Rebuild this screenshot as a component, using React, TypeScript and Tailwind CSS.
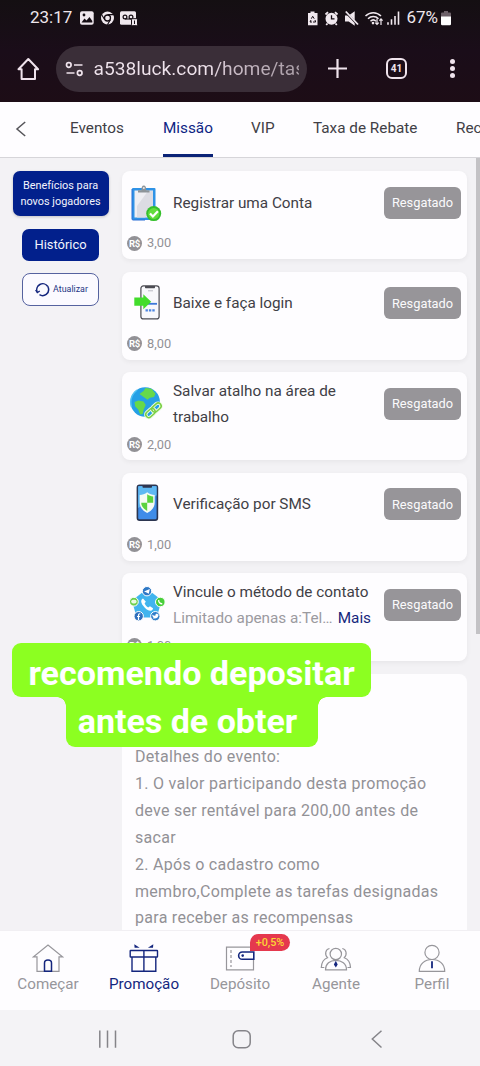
import type { ReactNode } from "react";

const tasks = [
  { title: "Registrar uma Conta", amount: "3,00", icon: <ClipboardIcon /> },
  { title: "Baixe e faça login", amount: "8,00", icon: <DownloadIcon /> },
  { title: "Salvar atalho na área de trabalho", amount: "2,00", icon: <GlobeIcon /> },
  { title: "Verificação por SMS", amount: "1,00", icon: <ShieldPhoneIcon /> },
  {
    title: "Vincule o método de contato",
    amount: "1,00",
    icon: <ContactIcon />,
    note: "Limitado apenas a:Tel…",
  },
];

const details = [
  "Detalhes do evento:",
  "1. O valor participando desta promoção",
  "deve ser rentável para 200,00 antes de",
  "sacar",
  "2. Após o cadastro como",
  "membro,Complete as tarefas designadas",
  "para receber as recompensas",
];

function TaskSvg({ children }: { children: ReactNode }) {
  return (
    <svg width="36" height="40" viewBox="0 0 36 40" fill="none" className="shrink-0">
      {children}
    </svg>
  );
}

function ClipboardIcon() {
  return (
    <TaskSvg>
      <rect x="2" y="5" width="23.5" height="32" rx="1" fill="#2f93e6" />
      <path d="M2 6v30a1 1 0 0 0 1 1h12" stroke="#2a6fd6" strokeWidth="1" />
      <rect x="4.5" y="7.5" width="18.5" height="27" fill="#eeeef3" />
      <path d="M7 23 18 8h5v20l-8 6.500H7z" fill="#dcdce3" />
      <path d="M8 9.500V7.200h3.500C11.500 4 12 2.500 13.800 2.500S16.200 4 16.200 7.200H19.500v2.300z" fill="#8d9499" />
      <circle cx="13.800" cy="5" r="1" fill="#e8e8ea" />
      <circle cx="23.700" cy="30.600" r="7.500" fill="#35bf2c" />
      <circle cx="23.700" cy="30.600" r="5.600" fill="#62dd3c" />
      <path d="m20 30.500 2.900 3 5-5.300" stroke="#fff" strokeWidth="2.200" />
    </TaskSvg>
  );
}

function DownloadIcon() {
  return (
    <TaskSvg>
      <rect x="10.900" y="2.900" width="18.200" height="33" rx="2.500" fill="#f8f8fb" stroke="#4b4b52" strokeWidth="1.200" />
      <path d="M15 3h10v1.200c0 .6-.4 1-1 1h-8c-.6 0-1-.4-1-1z" fill="#4b4b52" />
      <path d="M18 7.800h5" stroke="#b9b9c2" strokeWidth="1" />
      <path d="M18 20.800h9" stroke="#3d79d8" strokeWidth="1.800" />
      <path d="M15.500 27.300h9.500" stroke="#4e86e0" strokeWidth="2.200" strokeDasharray="2.400 1" />
      <path d="M4.300 14.500h9v-3.300l7.900 7.500-7.900 7.500v-3.400h-9z" fill="#43dc2c" />
    </TaskSvg>
  );
}

function GlobeIcon() {
  return (
    <TaskSvg>
      <circle cx="15.200" cy="18" r="14.700" fill="#25a0e6" />
      <path d="M7 6c-5 4-7.500 10-5.500 17" stroke="#53c3f2" strokeWidth="1.500" />
      <path d="m9.500 10 4-3 2-3 6 .8 4 5-1.500 3.200-4 .8-2.500 2-3.500-2.500z" fill="#66d94a" />
      <path d="m4.500 18 4-1.500 5 1 2.200 3.500-2 4.500-1 4.500-2.500.5-2-5-3-3z" fill="#66d94a" />
      <g transform="rotate(-42 23.600 26.300)">
        <rect x="14.200" y="23.200" width="10.500" height="6" rx="3" stroke="#eafbe2" strokeWidth="3.400" />
        <rect x="22.300" y="23.200" width="10.500" height="6" rx="3" stroke="#eafbe2" strokeWidth="3.400" />
        <rect x="14.200" y="23.200" width="10.500" height="6" rx="3" stroke="#7bcf45" strokeWidth="1.500" />
        <rect x="22.300" y="23.200" width="10.500" height="6" rx="3" stroke="#7bcf45" strokeWidth="1.500" />
      </g>
    </TaskSvg>
  );
}

function ShieldPhoneIcon() {
  return (
    <TaskSvg>
      <rect x="7.400" y="1.300" width="20" height="34.800" rx="2.200" fill="#3f8ce8" stroke="#2c3550" strokeWidth="1.600" />
      <path d="M8.200 2.200h18.400v9L8.200 24z" fill="#5fb9f3" />
      <path d="M12.500 1.500h9.500v1.200c0 .6-.4 1-1 1h-7.500c-.6 0-1-.4-1-1z" fill="#2c3550" />
      <path d="M17.200 8.300c2.300 1.900 4.800 2.500 7.500 2.700v7.500c0 5-3.500 8.500-7.500 10.500-4-2-7.500-5.500-7.500-10.500V11c2.700-.2 5.200-.8 7.500-2.700z" fill="#f6fbf4" />
      <path d="M17.200 10.300c2 1.400 3.800 2 6 2.300v6.200h-6z" fill="#5cd23e" />
      <path d="M17.200 18.800v8.200c-3.300-1.900-6-4.500-6-8.200z" fill="#5cd23e" />
    </TaskSvg>
  );
}

function ContactIcon() {
  return (
    <TaskSvg>
      <path d="m17 5 13.500 10.500-4.500 16-18.500 0L3 16z" fill="#41b4ee" stroke="#41b4ee" strokeWidth="2" strokeLinejoin="round" />
      <path d="M13 13.500c-2.500 1.500-2.200 4 0 7s5 5.500 7.500 5.200c1.700-.2 2.700-1.500 2.500-2.500l-3-2-1.800 1.200c-1.600-.8-3-2.500-3.600-4.200l1.300-1.500z" fill="#fff" />
      <g stroke="#fff" strokeWidth="1">
        <circle cx="17" cy="6.200" r="4.700" fill="#2f78c6" />
        <circle cx="3.900" cy="16.700" r="4.400" fill="#6ccf4c" />
        <circle cx="30.300" cy="17" r="4.800" fill="#49cf3a" />
        <circle cx="8.700" cy="31.200" r="4.700" fill="#2f6fbd" />
        <circle cx="25.300" cy="31.200" r="4.700" fill="#2f7dc9" />
      </g>
      <path d="m14 6.500 5.800-2.400-1 4.700-2.300-1.400z" fill="#fff" />
      <rect x="1.200" y="14.700" width="5.400" height="3.800" rx="1.900" fill="#eafbe2" />
      <path d="M28.700 15c-.3 2 1.500 4 3.600 3.700" stroke="#fff" strokeWidth="1.300" />
      <path d="M10.300 28.800c-1.500-.3-1.800.4-1.800 1.600V35M7 31.500h3" stroke="#fff" strokeWidth="1.200" />
      <path d="M22.300 29.500c1 1 2 1.300 3 1.200 0-1.800 1.500-2.200 2.500-1.500l.8.200c-.3 3-2 4.600-6 3.800l1-.7c-1-.8-1.400-1.800-1.300-3z" fill="#fff" />
    </TaskSvg>
  );
}

function StatusBar() {
  return (
    <div className="flex h-9 items-center pl-[30px] pr-[29px] text-[17px] text-[#eee6ec]">
      <span className="w-[50px] shrink-0">23:17</span>
      <svg width="58" height="16" viewBox="80 10 58 16" fill="none">
        <rect x="80" y="11.300" width="13.700" height="13.500" rx="2" fill="#f0e8ee" />
        <circle cx="84" cy="15" r="1.400" fill="#150d14" />
        <path d="m81.500 22.500 3-4 2 2 3-3.500 2.800 4v1.500z" fill="#150d14" />
        <circle cx="107.500" cy="18" r="6.500" fill="#f0e8ee" />
        <circle cx="107.500" cy="18" r="3" fill="#f0e8ee" stroke="#150d14" strokeWidth="1.300" />
        <path d="M107.500 14.600h6M104.700 19.800l-3-5M110.400 19.700l-3 5" stroke="#150d14" strokeWidth="1.100" />
        <rect x="120" y="11.300" width="16" height="13.500" rx="1.500" fill="#f0e8ee" />
        <circle cx="125" cy="17" r="1.900" stroke="#150d14" strokeWidth="1.200" />
        <circle cx="131" cy="17" r="1.900" stroke="#150d14" strokeWidth="1.200" />
        <path d="M125 19h6" stroke="#150d14" strokeWidth="1.100" />
        <rect x="131.500" y="18.700" width="6" height="7" rx="1" fill="#f0e8ee" stroke="#150d14" strokeWidth="1" />
        <path d="M134.500 20.500v3.500" stroke="#150d14" strokeWidth="1" />
      </svg>
      <svg className="ml-auto mr-[6px] shrink-0" width="94" height="17" viewBox="306 9.500 94 17" fill="none">
        <path d="M310.500 11h4v1.500h3v12.300h-9.500V12.500h2.500z" fill="#f0e8ee" />
        <path d="m311.300 18.200 1.400-2.400 1.500 2.400M315 19.500l.6 2h-2.600M312 21.500h-2l1-2" stroke="#150d14" strokeWidth="1" />
        <circle cx="331.500" cy="18.300" r="6" fill="#f0e8ee" />
        <path d="m325.500 14 2.500-2.300M337.500 14 335 11.700M327.500 23l-1.300 1.500M335.500 23l1.300 1.500" stroke="#f0e8ee" strokeWidth="1.800" />
        <path d="M331.500 14.800v3.500h3" stroke="#150d14" strokeWidth="1.300" />
        <path d="M345 15h3.700l6-4.200v14.400l-6-4.200H345z" fill="#f0e8ee" />
        <path d="m344.500 10.500 13 13.500" stroke="#150d14" strokeWidth="2" />
        <path d="m345.800 11 12.200 13" stroke="#f0e8ee" strokeWidth="1.800" />
        <path d="M365.500 15.500c4.500-4.500 11-4.500 15.500 0M368 18.200c3-3 7.500-3 10.500 0M370.500 20.700c1.600-1.500 3.900-1.500 5.500 0" stroke="#f0e8ee" strokeWidth="1.500" />
        <circle cx="373" cy="22.600" r="1.300" fill="#f0e8ee" />
        <path d="M377 18v6m-1.800-1.800L377 24l1.800-1.800M381 24.500v-6m-1.600 1.700 1.600-1.700 1.600 1.700" stroke="#f0e8ee" strokeWidth="1.200" />
        <path d="M388 24.300v-2.500M391.500 24.300v-5.500M395 24.300v-8.800M398.500 24.300V11" stroke="#f0e8ee" strokeWidth="1.600" />
      </svg>
      <span className="shrink-0">67%</span>
      <svg className="ml-[3px] shrink-0" width="10" height="15" viewBox="0 0 10 15">
        <path d="M3 0h4v1.500h2a1 1 0 0 1 1 1V6H0V2.500a1 1 0 0 1 1-1h2z" fill="#6d6169" />
        <path d="M0 5.500h10V13a1.200 1.200 0 0 1-1.200 1.200H1.200A1.200 1.200 0 0 1 0 13z" fill="#fff" />
      </svg>
    </div>
  );
}

function BrowserBar() {
  return (
    <div className="flex h-[66px] items-center pb-[1px] text-[#efe3ec]">
      <svg className="ml-[17px] shrink-0" width="23" height="24" viewBox="0 0 23 24" fill="none" stroke="currentColor" strokeWidth="2">
        <path d="M1.500 12.200 11.300 2l9.800 10.200H18V22H4.600v-9.800z" strokeLinejoin="round" />
      </svg>
      <div className="ml-[16px] flex h-[46px] w-[251px] shrink-0 items-center rounded-full bg-[#3a2e38] pl-[9px]">
        <svg className="shrink-0" width="19" height="16" viewBox="0 0 19 16" fill="none" stroke="currentColor" strokeWidth="1.700">
          <circle cx="3.800" cy="4" r="2.300" />
          <path d="M9 4h8.500M1.500 12h8" />
          <circle cx="14.700" cy="12" r="2.300" />
        </svg>
        <div className="ml-[9.500px] w-[205px] overflow-hidden whitespace-nowrap bg-linear-to-r from-[#efe3ec] from-55% via-[#cdbfca] via-65% to-[#a99da6] bg-clip-text pt-[2px] text-[19.200px] text-transparent">
          a538luck.com/home/task
        </div>
      </div>
      <svg className="ml-[21px] shrink-0" width="19" height="19" viewBox="0 0 19 19" stroke="currentColor" strokeWidth="2.200">
        <path d="M9.500 0v19M0 9.500h19" />
      </svg>
      <div className="ml-[39px] flex h-[21px] w-[21px] shrink-0 items-center justify-center rounded-[6px] border-2 border-[#efe3ec] text-[10px] font-bold">
        41
      </div>
      <div className="ml-[43px] flex flex-col gap-[2.500px]">
        <span className="size-[4.600px] rounded-full bg-[#efe3ec]" />
        <span className="size-[4.600px] rounded-full bg-[#efe3ec]" />
        <span className="size-[4.600px] rounded-full bg-[#efe3ec]" />
      </div>
    </div>
  );
}

function Tabs() {
  return (
    <div className="flex h-14 shrink-0 items-stretch overflow-hidden whitespace-nowrap border-b border-[#d6d5d9] bg-[#fefdff] text-[15.300px] leading-[52px] text-[#414046]">
      <svg className="ml-[15px] mt-[19px] shrink-0" width="12" height="16" viewBox="0 0 12 16" fill="none" stroke="#555459" strokeWidth="1.500">
        <path d="M10.200 1 2 8l8.200 7" />
      </svg>
      <span className="ml-[43px] w-[55px] shrink-0">Eventos</span>
      <span className="ml-[38px] w-[50px] shrink-0 border-b-[3px] border-[#0b2377] text-[#0d2484]">Missão</span>
      <span className="ml-[38px] w-[24px] shrink-0">VIP</span>
      <span className="ml-[38px] w-[106px] shrink-0">Taxa de Rebate</span>
      <span className="ml-[37px] shrink-0">Recompensas</span>
    </div>
  );
}

function Sidebar() {
  return (
    <div className="flex w-[122px] shrink-0 flex-col items-center pr-px pt-[13px] text-[#f3f4fd]">
      <div className="flex h-[45px] w-24 items-center justify-center rounded-[7px] bg-[#02208c] text-center text-[10.900px] leading-4 shadow-[0_1px_3px_#0003]">
        Benefícios para
        <br />
        novos jogadores
      </div>
      <div className="mt-[13px] flex h-8 w-[77px] items-center justify-center rounded-[7px] bg-[#02208c] text-[12.900px]">
        Histórico
      </div>
      <div className="mt-3 flex h-[33px] w-[77px] items-center justify-center gap-[3px] rounded-[8px] border border-[#55629f] bg-[#fbfaff] pl-[2px] text-[8.900px] text-[#263684]">
        <svg width="15" height="15" viewBox="0 0 15 15" fill="none" stroke="#14267e" strokeWidth="1.500">
          <path d="M2.200 10A6 6 0 0 1 12.600 4.200M13.400 6A6 6 0 0 1 4.500 12.700" />
          <path d="M12.600 4.200A6 6 0 0 1 13.400 6" />
          <path d="m.6 8 1.700 2.600L4.800 9" strokeWidth="1.300" />
        </svg>
        Atualizar
      </div>
    </div>
  );
}

function TaskCard({ title, amount, icon, note }: { title: string; amount: string; icon: ReactNode; note?: string }) {
  return (
    <div className="h-[88px] shrink-0 rounded-[8px] bg-[#fefdff] shadow-[0_2px_5px_#0000000d]">
      <div className="flex h-[63px] items-center pl-2 pr-[6px]">
        {icon}
        <div className="ml-[7px] w-[200px] text-[15.300px] leading-[26px] text-[#414046]">
          {title}
          {note && (
            <div className="flex justify-between whitespace-nowrap pr-[2px] text-[#9b9a9f]">
              {note}
              <span className="text-[#15267d]">Mais</span>
            </div>
          )}
        </div>
        <div className="ml-auto flex h-8 w-[77px] shrink-0 items-center justify-center rounded-[6px] bg-[#979599] text-[12.800px] text-[#fbfafc]">
          Resgatado
        </div>
      </div>
      <div className="-mt-px flex h-5 items-center pl-[5px] text-[12.800px] text-[#929196]">
        <span className="mr-[5px] flex size-[15px] items-center justify-center rounded-full bg-[#929196] text-[9.500px] font-bold leading-[15px] tracking-[-0.300px] text-white">
          R$
        </span>
        {amount}
      </div>
    </div>
  );
}

function NavItem({ label, active, children }: { label: string; active?: boolean; children: ReactNode }) {
  return (
    <div className="relative flex w-24 flex-col items-center pt-[11px]">
      <svg width="32" height="32" viewBox="0 0 32 32" fill="none" stroke="#97969b" strokeWidth="1.200">
        {children}
      </svg>
      <span className={active ? "text-[#14267e]" : "text-[#97969b]"}>{label}</span>
    </div>
  );
}

function BottomNav() {
  return (
    <nav className="flex h-20 shrink-0 border-t border-[#f1eff3] bg-[#fefdff] text-[15.200px] leading-[21px]">
      <NavItem label="Começar">
        <path d="M5 14.800H1.500L16 3l14.500 11.800H27v14.500H5z" />
        <path d="M12.500 29.300V21c0-2 1.200-3 3.500-3s3.500 1 3.500 3v8.300z" stroke="#14267e" strokeWidth="1.500" />
      </NavItem>
      <NavItem label="Promoção" active>
        <g stroke="#14267e" strokeWidth="1.400">
          <rect x="2.200" y="8.500" width="27.300" height="6.500" rx=".5" />
          <path d="M4 15v14.300h23.800V15M15.900 8.500v20.800" />
        </g>
        <path d="m6.300 2.300 5.400 3.500H6.600zM25.300 2.300l-5.400 3.500H25z" fill="#14267e" stroke="none" />
      </NavItem>
      <div className="relative">
        <NavItem label="Depósito">
          <path d="M29.500 9V5.200h-27v22.600h27v-10" />
          <path d="M7 8v17" strokeDasharray="3 2" />
          <path d="M29.800 10H18.300a3.600 3.600 0 0 0 0 7.300h11.500z" stroke="#14267e" strokeWidth="1.600" />
          <circle cx="18.700" cy="13.600" r="1.300" fill="#14267e" stroke="none" />
        </NavItem>
        <span className="absolute left-[58px] top-[3px] h-[17px] w-10 rounded-[9px] rounded-bl-none bg-[#e5384e] text-center text-[10.800px] font-medium leading-[17px] text-[#fbd535]">
          +0,5%
        </span>
      </div>
      <NavItem label="Agente">
        <circle cx="15.800" cy="12" r="5.700" />
        <path d="M5.500 27.800c0-6 4.500-9.500 10.300-9.500s10.700 3.500 10.700 9.500z" />
        <path d="M9.500 6.500c-4 .5-5.200 6-2 9.200-3.500 1.300-6 4.500-6.200 9.800h3M22.300 6.500c4 .5 5.200 6 2 9.200 3.500 1.300 6 4.500 6.200 9.800h-3" />
        <path d="m15.800 18.800 1.900 3.800-1.900 2.800-1.900-2.800z" fill="#14267e" stroke="none" />
      </NavItem>
      <NavItem label="Perfil">
        <circle cx="16" cy="10.400" r="7.100" />
        <path d="M3.300 29.300c0-7.500 5.500-11.800 12.700-11.800s12.700 4.300 12.700 11.800z" />
        <path d="M16 19.300v7" stroke="#14267e" strokeWidth="1.800" />
      </NavItem>
    </nav>
  );
}

function SystemNav() {
  return (
    <div className="flex h-14 shrink-0 items-center bg-[#f4f3f6] pl-[98px]">
      <svg width="288" height="20" viewBox="98 0 288 20" fill="none" stroke="#858489" strokeWidth="1.500" className="mt-[2px]">
        <path d="M99.800 1.500v17.300M107.500 1.500v17.300M115.500 1.500v17.300" />
        <rect x="233.200" y="1.700" width="17" height="17" rx="5" />
        <path d="M381.500 1.700 372.300 10l9.200 8.500" />
      </svg>
    </div>
  );
}

function Caption() {
  return (
    <div className="absolute left-3 top-[643px] whitespace-nowrap font-bold text-white">
      <div className="h-[54px] w-[359px] rounded-[9px] bg-[#8cff21] text-center text-[34.100px] leading-[61px]">
        <span className="relative z-10">recomendo depositar</span>
      </div>
      <div className="relative -mt-[9px] ml-[54px] h-[59px] w-[252px] rounded-b-[9px] bg-[#8cff21] pr-[9px] text-center text-[34px] leading-[67px]">
        antes de obter
        <span className="absolute -left-[9px] top-[9px] size-[9px] bg-[radial-gradient(circle_at_0_100%,transparent_8.500px,#8cff21_9px)]" />
        <span className="absolute -right-[9px] top-[9px] size-[9px] bg-[radial-gradient(circle_at_100%_100%,transparent_8.500px,#8cff21_9px)]" />
      </div>
    </div>
  );
}

export default function App() {
  return (
    <div className="relative flex h-[1066px] w-[480px] flex-col overflow-hidden bg-[#f3f2f5] font-['Roboto',sans-serif]">
      <header className="h-[102px] shrink-0 bg-linear-to-b from-[#140f12] via-[#1a0d19] to-[#1d0d16]">
        <StatusBar />
        <BrowserBar />
      </header>
      <Tabs />
      <main className="flex h-[772px] shrink-0 overflow-hidden">
        <Sidebar />
        <div className="flex w-[345px] flex-col gap-[12.600px] pt-[13px]">
          {tasks.map((task) => (
            <TaskCard key={task.title} {...task} />
          ))}
          <div className="h-[270px] shrink-0 whitespace-nowrap rounded-t-[8px] bg-[#fefdff] pl-[13px] pt-[70px] text-[16px] leading-[26.900px] tracking-[0.280px] text-[#929196]">
            {details.map((line) => (
              <p key={line}>{line}</p>
            ))}
          </div>
        </div>
        <div className="ml-auto h-[476px] w-1 bg-[#c3c2c5]" />
      </main>
      <BottomNav />
      <SystemNav />
      <Caption />
    </div>
  );
}
